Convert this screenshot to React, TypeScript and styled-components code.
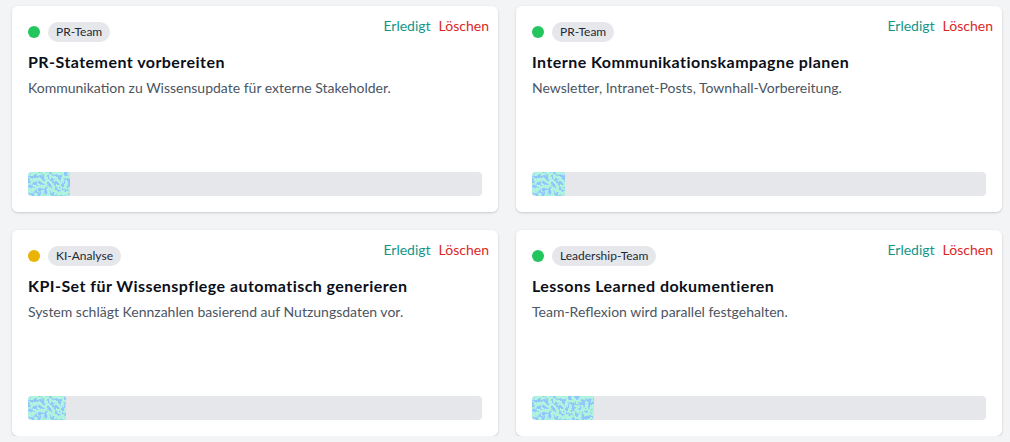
import React from "react";
import styled, { createGlobalStyle } from "styled-components";

const GlobalStyle = createGlobalStyle`
  html, body {
    margin: 0;
    padding: 0;
    background: #f3f4f6;
    font-family: Lato, "Noto Sans", sans-serif;
    overflow: hidden;
  }
  * { box-sizing: border-box; }
`;

const Board = styled.div`
  display: grid;
  grid-template-columns: repeat(2, 1fr);
  gap: 18px;
  padding: 6px 8px 0 12px;
  width: 1010px;
`;

const Card = styled.div`
  background: #ffffff;
  border-radius: 6px;
  box-shadow: 0 1px 3px rgba(0, 0, 0, 0.12), 0 1px 2px rgba(0, 0, 0, 0.06);
  height: 206px;
  padding: 16px;
  display: flex;
  flex-direction: column;
`;

const Header = styled.div`
  display: flex;
  justify-content: space-between;
  align-items: flex-start;
`;

const Meta = styled.div`
  display: flex;
  align-items: center;
  gap: 8px;
  height: 20px;
`;

const Dot = styled.span<{ $color: string }>`
  width: 12px;
  height: 12px;
  border-radius: 50%;
  background: ${(p) => p.$color};
`;

const Badge = styled.span`
  background: #e5e7eb;
  color: #1f2937;
  font-size: 12px;
  line-height: 20px;
  height: 20px;
  padding: 0 8px;
  border-radius: 999px;
`;

const Actions = styled.div`
  display: flex;
  gap: 8px;
  margin: -6px -7px 0 0;
`;

const ActionButton = styled.button<{ $tone: "done" | "delete" }>`
  background: none;
  border: none;
  padding: 0;
  font-family: inherit;
  font-size: 14px;
  line-height: 20px;
  cursor: pointer;
  color: ${(p) => (p.$tone === "done" ? "#14958a" : "#dc2626")};
`;

const Title = styled.h3`
  margin: 8px 0 0;
  font-size: 16px;
  line-height: 24px;
  font-weight: 700;
  letter-spacing: 0.45px;
  color: #0b0f19;
`;

const Description = styled.p`
  margin: 4px 0 0;
  font-size: 14px;
  line-height: 20px;
  color: #4b5563;
`;

const Track = styled.div`
  margin-top: auto;
  height: 24px;
  background: #e5e7eb;
  border-radius: 4px;
  overflow: hidden;
`;

const Fill = styled.div`
  height: 100%;
  border-radius: 4px;
  overflow: hidden;
  background: #93c5fd;
`;

const NoiseSvg = styled.svg`
  display: block;
  width: 100%;
  height: 100%;
`;

type Task = {
  team: string;
  status: string;
  title: string;
  description: string;
  progress: number;
};

const tasks: Task[] = [
  {
    team: "PR-Team",
    status: "#22c55e",
    title: "PR-Statement vorbereiten",
    description: "Kommunikation zu Wissensupdate für externe Stakeholder.",
    progress: 9.2,
  },
  {
    team: "PR-Team",
    status: "#22c55e",
    title: "Interne Kommunikationskampagne planen",
    description: "Newsletter, Intranet-Posts, Townhall-Vorbereitung.",
    progress: 7.3,
  },
  {
    team: "KI-Analyse",
    status: "#eab308",
    title: "KPI-Set für Wissenspflege automatisch generieren",
    description: "System schlägt Kennzahlen basierend auf Nutzungsdaten vor.",
    progress: 8.3,
  },
  {
    team: "Leadership-Team",
    status: "#22c55e",
    title: "Lessons Learned dokumentieren",
    description: "Team-Reflexion wird parallel festgehalten.",
    progress: 13.6,
  },
];

const Noise: React.FC<{ id: string }> = ({ id }) => (
  <NoiseSvg preserveAspectRatio="none">
    <defs>
      <filter id={id} x="0" y="0" width="100%" height="100%">
        <feTurbulence type="fractalNoise" baseFrequency="0.3" numOctaves="2" seed="5" />
        <feColorMatrix
          type="matrix"
          values="0 0 0 0 0.431  0 0 0 0 0.906  0 0 0 0 0.718  12 0 0 0 -5.1"
        />
      </filter>
    </defs>
    <rect width="100%" height="100%" fill="#93c5fd" />
    <rect width="100%" height="100%" filter={`url(#${id})`} />
  </NoiseSvg>
);

export default function App() {
  return (
    <>
      <GlobalStyle />
      <Board>
        {tasks.map((t, i) => (
          <Card key={i}>
            <Header>
              <Meta>
                <Dot $color={t.status} />
                <Badge>{t.team}</Badge>
              </Meta>
              <Actions>
                <ActionButton $tone="done">Erledigt</ActionButton>
                <ActionButton $tone="delete">Löschen</ActionButton>
              </Actions>
            </Header>
            <Title>{t.title}</Title>
            <Description>{t.description}</Description>
            <Track>
              <Fill style={{ width: `${t.progress}%` }}>
                <Noise id={`noise-${i}`} />
              </Fill>
            </Track>
          </Card>
        ))}
      </Board>
    </>
  );
}
